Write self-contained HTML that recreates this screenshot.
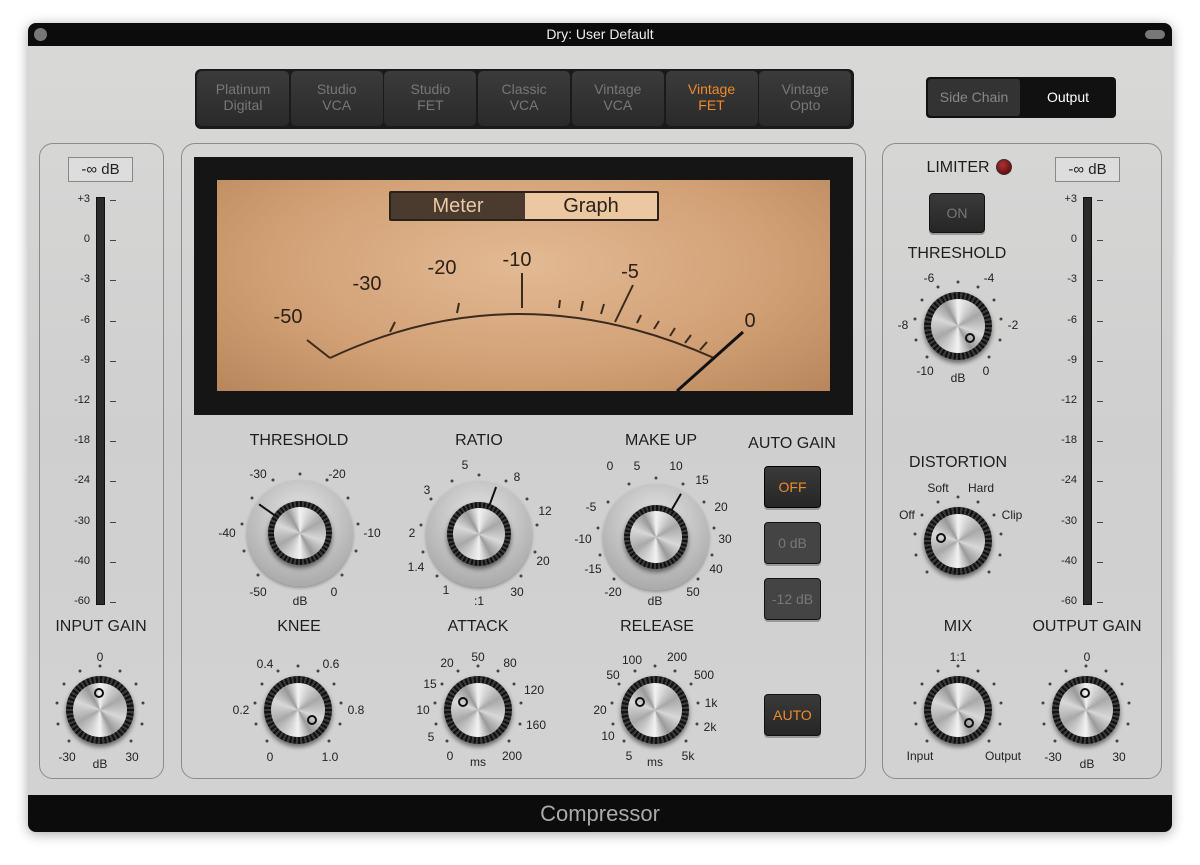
<!DOCTYPE html>
<html><head><meta charset="utf-8">
<style>
*{box-sizing:border-box;margin:0;padding:0}
body{width:1200px;height:865px;background:#fff;position:relative;overflow:hidden;font-family:"Liberation Sans",sans-serif;color:#222}
.a{position:absolute}
#win{position:absolute;left:28px;top:23px;width:1144px;height:809px;border-radius:8px;overflow:hidden;background:linear-gradient(180deg,#d9d9d7,#cfcfcf 50%,#d3d3d3);box-shadow:0 2px 12px rgba(0,0,0,.35)}
.panel{position:absolute;border:1px solid #8c8c8c;border-radius:14px}
.lab{position:absolute;font-size:16px;color:#1e1e1e;transform:translateX(-50%);white-space:nowrap}
.sm{position:absolute;font-size:12px;color:#222;transform:translate(-50%,-50%);white-space:nowrap}
.dot{position:absolute;width:3px;height:3px;border-radius:50%;background:#444;transform:translate(-50%,-50%)}
.btn{position:absolute;background:linear-gradient(#3a3a3a,#262626);border:1px solid #111;border-radius:4px;color:#777;font-size:14px;display:flex;align-items:center;justify-content:center;box-shadow:0 2px 0 #999}
.mb{position:absolute;top:2px;height:55px;width:92px;background:linear-gradient(#3b3b3b,#2a2a2a);border-radius:5px;color:#777;font-size:14px;text-align:center;line-height:16px;padding-top:10px}
.outer{position:absolute;border-radius:50%;background:radial-gradient(circle at 50% 35%,#e6e6e6,#b9b9b9 60%,#9a9a9a);box-shadow:0 2px 3px rgba(0,0,0,.3)}
.rim{position:absolute;border-radius:50%;background:repeating-conic-gradient(#111 0 4deg,#3a3a3a 4deg 8deg);box-shadow:0 3px 5px rgba(0,0,0,.5)}
.cap{position:absolute;border-radius:50%;background:conic-gradient(from 0deg,#f2f2f2,#a8a8a8 60deg,#d8d8d8 110deg,#9a9a9a 150deg,#f2f2f2 180deg,#a8a8a8 240deg,#d8d8d8 290deg,#9a9a9a 330deg,#f2f2f2)}
.meterlab{position:absolute;font-size:11px;color:#222;text-align:right;width:30px}
</style></head><body>
<div id="win">
 <div class="a" style="left:0;top:0;width:1144px;height:23px;background:#0c0c0c;color:#eee;font-size:14px;text-align:center;line-height:23px">Dry: User Default</div>
 <div class="a" style="left:6px;top:5px;width:13px;height:13px;border-radius:50%;background:#777"></div>
 <div class="a" style="left:1117px;top:7px;width:20px;height:9px;border-radius:5px;background:#777"></div>
 <div class="a" style="left:0;top:772px;width:1144px;height:37px;background:#0c0c0c;color:#aaa;font-size:22px;text-align:center;line-height:37px">Compressor</div>
</div>
<div id="c"></div>
<script>
const C=document.getElementById('c');
function h(s){C.insertAdjacentHTML('beforeend',s)}
h('<div class="panel" style="left:39px;top:143px;width:125px;height:636px"></div>');
h('<div class="panel" style="left:181px;top:143px;width:685px;height:636px"></div>');
h('<div class="panel" style="left:882px;top:143px;width:280px;height:636px"></div>');
let m='<div class="a" style="left:195px;top:69px;width:659px;height:60px;background:#1a1a1a;border-radius:6px">';
const names=[['Platinum','Digital'],['Studio','VCA'],['Studio','FET'],['Classic','VCA'],['Vintage','VCA'],['Vintage','FET'],['Vintage','Opto']];
names.forEach((n,i)=>{m+=`<div class="mb" style="left:${2+i*93.7}px;${i==5?'color:#f08a2a':''}">${n[0]}<br>${n[1]}</div>`});
h(m+'</div>');
h('<div class="a" style="left:926px;top:77px;width:190px;height:41px;background:#111;border-radius:4px"><div class="a" style="left:2px;top:2px;width:92px;height:37px;background:#333;border-radius:3px;color:#888;font-size:14px;text-align:center;line-height:37px">Side Chain</div><div class="a" style="left:96px;top:2px;width:92px;height:37px;color:#fff;font-size:14px;text-align:center;line-height:37px">Output</div></div>');
h(`<div class="a" style="left:194px;top:157px;width:659px;height:258px;background:#151515"></div>
<div class="a" style="left:217px;top:180px;width:613px;height:211px;background:radial-gradient(ellipse at 50% 40%,#e3ba94,#d19f74 60%,#b8865c)"></div>
<div class="a" style="left:389px;top:191px;width:270px;height:30px;border:2px solid #2a2118;background:#ebc8a2;border-radius:2px"><div class="a" style="left:0;top:0;width:134px;height:26px;background:#4a3b2e;color:#e6c9a6;font-size:20px;text-align:center;line-height:26px">Meter</div><div class="a" style="left:134px;top:0;width:132px;height:26px;color:#2b2117;font-size:20px;text-align:center;line-height:26px">Graph</div></div>
<svg class="a" style="left:217px;top:180px" width="613" height="211"><g stroke="#3a2b1e" stroke-width="2" fill="none"><path d="M113 178 Q300 90 497 178"/><path d="M113 178 L90 160"/><line x1="173" y1="152" x2="178" y2="142"/><line x1="240" y1="133" x2="242" y2="123"/><line x1="305" y1="128" x2="305" y2="93"/><line x1="342" y1="128" x2="343" y2="120"/><line x1="364" y1="131" x2="366" y2="121"/><line x1="384" y1="134" x2="387" y2="124"/><line x1="398" y1="142" x2="416" y2="105"/><line x1="420" y1="143" x2="424" y2="135"/><line x1="437" y1="149" x2="442" y2="141"/><line x1="453" y1="156" x2="458" y2="148"/><line x1="468" y1="163" x2="474" y2="155"/><line x1="483" y1="170" x2="490" y2="162"/></g><line x1="460" y1="211" x2="526" y2="152" stroke="#111" stroke-width="3"/><g font-size="20" fill="#2b2117" text-anchor="middle" font-family="Liberation Sans"><text x="71" y="143">-50</text><text x="150" y="110">-30</text><text x="225" y="94">-20</text><text x="300" y="86">-10</text><text x="413" y="98">-5</text><text x="533" y="147">0</text></g></svg>`);
[['THRESHOLD',299,432],['RATIO',479,432],['MAKE UP',661,432],['AUTO GAIN',792,435],['KNEE',299,618],['ATTACK',478,618],['RELEASE',657,618],['INPUT GAIN',101,618],['LIMITER',958,159],['THRESHOLD',957,245],['DISTORTION',958,454],['MIX',958,618],['OUTPUT GAIN',1087,618]].forEach(l=>h(`<div class="lab" style="left:${l[1]}px;top:${l[2]}px">${l[0]}</div>`));
h('<div class="a" style="left:996px;top:159px;width:16px;height:16px;border-radius:50%;background:radial-gradient(circle at 40% 35%,#a33,#500);border:1px solid #333"></div>');
h('<div class="btn" style="left:929px;top:193px;width:56px;height:40px">ON</div>');
h('<div class="btn" style="left:764px;top:466px;width:57px;height:42px;color:#f08a2a;border-color:#000">OFF</div>');
h('<div class="btn" style="left:764px;top:522px;width:57px;height:42px;background:#444">0 dB</div>');
h('<div class="btn" style="left:764px;top:578px;width:57px;height:42px;background:#444">-12 dB</div>');
h('<div class="btn" style="left:764px;top:694px;width:57px;height:42px;color:#f08a2a">AUTO</div>');
function meter(x,dx){
 h(`<div class="a" style="left:${dx-32}px;top:157px;width:65px;height:25px;border:1px solid #888;background:#ddd;font-size:15px;text-align:center;line-height:23px">-∞ dB</div>`);
 h(`<div class="a" style="left:${x}px;top:197px;width:9px;height:408px;background:#2a2a2a;border:1px solid #111"></div>`);
 const L=['+3','0','-3','-6','-9','-12','-18','-24','-30','-40','-60'];
 L.forEach((t,i)=>{const y=200+i*40.2;h(`<div class="meterlab" style="left:${x-36}px;top:${y-7}px">${t}</div><div class="a" style="left:${x+14}px;top:${y}px;width:6px;height:1px;background:#444"></div>`)});
}
meter(96,100);meter(1083,1087);
function knob(cx,cy,big,ang,labels,sc,ptype){
 if(big){h(`<div class="outer" style="left:${cx-53}px;top:${cy-53}px;width:106px;height:106px"></div>`)}
 const r=big?32:34, cr=big?26:27;
 h(`<div class="rim" style="left:${cx-r}px;top:${cy-r}px;width:${2*r}px;height:${2*r}px"></div><div class="cap" style="left:${cx-cr}px;top:${cy-cr}px;width:${2*cr}px;height:${2*cr}px"></div>`);
 const a=(ang-90)*Math.PI/180;
 if(ptype=='line'){const x1=cx+Math.cos(a)*30,y1=cy+Math.sin(a)*30,x2=cx+Math.cos(a)*50,y2=cy+Math.sin(a)*50;
  h(`<svg class="a" style="left:0;top:0;overflow:visible" width="1" height="1"><line x1="${x1}" y1="${y1}" x2="${x2}" y2="${y2}" stroke="#111" stroke-width="2"/></svg>`)}
 else{const px=cx+Math.cos(a)*17,py=cy+Math.sin(a)*17;h(`<div class="a" style="left:${px-5}px;top:${py-5}px;width:10px;height:10px;border-radius:50%;border:2px solid #111"></div>`)}
 const dr=big?59:44;
 for(let i=0;i<11;i++){const t=(-135+i*27)-90,rr=t*Math.PI/180;h(`<div class="dot" style="left:${cx+Math.cos(rr)*dr}px;top:${cy+Math.sin(rr)*dr}px"></div>`)}
 labels.forEach(l=>h(`<div class="sm" style="left:${l[1]}px;top:${l[2]}px">${l[0]}</div>`));
}
knob(300,533,1,-55,[['-30',258,474],['-20',337,474],['-40',227,533],['-10',372,533],['-50',258,592],['dB',300,601],['0',334,592]],0,'line');
knob(479,534,1,20,[['5',465,465],['8',517,477],['3',427,490],['12',545,511],['2',412,533],['1.4',416,567],['20',543,561],['1',446,590],[':1',479,601],['30',517,592]],0,'line');
knob(656,537,1,30,[['0',610,466],['5',637,466],['10',676,466],['15',702,480],['-5',591,507],['20',721,507],['-10',583,539],['30',725,539],['-15',593,569],['40',716,569],['-20',613,592],['dB',655,601],['50',693,592]],0,'line');
knob(100,710,0,-5,[['0',100,657],['-30',67,757],['dB',100,764],['30',132,757]]);
knob(298,710,0,125,[['0.4',265,664],['0.6',331,664],['0.2',241,710],['0.8',356,710],['0',270,757],['1.0',330,757]]);
knob(478,710,0,-60,[['50',478,657],['20',447,663],['80',510,663],['15',430,684],['120',534,690],['10',423,710],['160',536,725],['5',431,737],['0',450,756],['ms',478,762],['200',512,756]]);
knob(655,710,0,-60,[['100',632,660],['200',677,657],['50',613,675],['500',704,675],['20',600,710],['1k',711,703],['10',608,736],['2k',710,727],['5',629,756],['ms',655,762],['5k',688,756]]);
knob(958,710,0,140,[['1:1',958,657],['Input',920,756],['Output',1003,756]]);
knob(1086,710,0,-5,[['0',1087,657],['-30',1053,757],['dB',1087,764],['30',1119,757]]);
knob(958,326,0,135,[['-6',929,278],['-4',989,278],['-8',903,325],['-2',1013,325],['-10',925,371],['dB',958,378],['0',986,371]]);
knob(958,541,0,-80,[['Soft',938,488],['Hard',981,488],['Off',907,515],['Clip',1012,515]]);
</script>
</body></html>
